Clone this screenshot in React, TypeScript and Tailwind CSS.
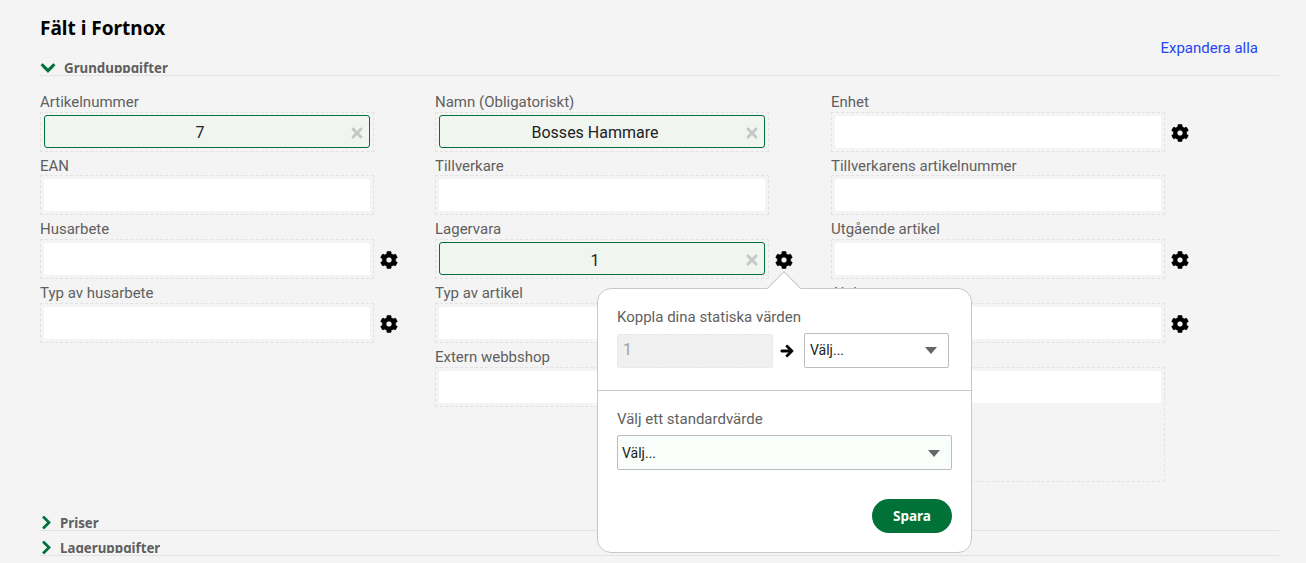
import React from "react";
import { FaCog, FaChevronDown, FaChevronRight, FaArrowRight, FaTimes } from "react-icons/fa";

type F = { label: string; value?: string; gear?: boolean; tall?: boolean };

const columns: F[][] = [
  [
    { label: "Artikelnummer", value: "7" },
    { label: "EAN" },
    { label: "Husarbete", gear: true },
    { label: "Typ av husarbete", gear: true },
  ],
  [
    { label: "Namn (Obligatoriskt)", value: "Bosses Hammare" },
    { label: "Tillverkare" },
    { label: "Lagervara", value: "1", gear: true },
    { label: "Typ av artikel" },
    { label: "Extern webbshop" },
  ],
  [
    { label: "Enhet", gear: true },
    { label: "Tillverkarens artikelnummer" },
    { label: "Utgående artikel", gear: true },
    { label: "Aktiv", gear: true },
    { label: "", tall: true },
  ],
];

function Field({ f }: { f: F }) {
  return (
    <div className="flex flex-col">
      <div className="h-[23.75px] text-[15px] leading-[28px] text-[#5f5f5f] whitespace-nowrap">{f.label}</div>
      <div className="flex items-start">
        <div
          className={`w-[334px] ${f.tall ? "h-[115px]" : "h-[40px]"} border border-dashed border-[#e2e2e2] p-[3px]`}
        >
          {f.value ? (
            <div className="relative -mt-[1px] flex h-[33px] items-center justify-center rounded-[3px] border border-[#00703c] bg-[#f0f5f0] pr-[14px] pt-[4px] text-[16px] text-[#222222]">
              {f.value}
              <FaTimes className="absolute right-[4px] top-[9px] text-[16px] text-[#c4c8c6]" />
            </div>
          ) : (
            <div className="h-[32px] rounded-[2px] bg-white" />
          )}
        </div>
        {f.gear && <FaCog className="ml-[6px] mt-[12px] stroke-current stroke-[8] text-[18px] text-black" />}
      </div>
    </div>
  );
}

function Caret() {
  return <span className="h-0 w-0 border-x-[6px] border-t-[7px] border-x-transparent border-t-[#666666]" />;
}

function Collapsed({ label }: { label: string }) {
  return (
    <div className="mt-[9px] flex h-[16px] items-start gap-[6px] overflow-hidden border-b border-[#e2e2e2]">
      <FaChevronRight className="-ml-[1px] stroke-current stroke-[20] text-[15px] text-[#00703c]" />
      <span className="block h-[13px] overflow-hidden text-[13.3px] font-bold leading-[16px] text-[#5f5f5f] font-['Noto_Sans',sans-serif]">{label}</span>
    </div>
  );
}

export default function App() {
  return (
    <div className="relative h-[563px] w-[1306px] overflow-hidden bg-[#f4f4f4] pl-[40px] pr-[27px] font-['Roboto',sans-serif]">
      <div className="flex h-[60px] items-start justify-between">
        <h1 className="mt-[15px] text-[19px] font-bold leading-[26px] text-black font-['Noto_Sans',sans-serif]">Fält i Fortnox</h1>
        <a className="mr-[21px] mt-[39px] text-[15px] leading-[19px] text-[#2546f0]">Expandera alla</a>
      </div>

      <div className="flex h-[16px] items-start overflow-hidden border-b border-[#e2e2e2]">
        <FaChevronDown className="stroke-current stroke-[30] text-[16px] text-[#00703c]" />
        <span className="ml-[8px] block h-[13px] overflow-hidden text-[13.3px] font-bold leading-[16px] text-[#5f5f5f] font-['Noto_Sans',sans-serif]">Grunduppgifter</span>
      </div>

      <div className="grid h-[431px] grid-cols-[395px_396px_395px] pt-[11.85px]">
        {columns.map((col, i) => (
          <div key={i} className="flex flex-col">
            {col.map((f, j) => (
              <Field key={j} f={f} />
            ))}
          </div>
        ))}
      </div>

      <div className="-mt-[1px]">
        <Collapsed label="Priser" />
        <Collapsed label="Lageruppgifter" />
      </div>

      {/* Popover */}
      <div className="absolute left-[597px] top-[288px] z-10 h-[265px] w-[375px] rounded-[14px] border border-[#c8c8c8] bg-white">
        <div className="absolute left-[174px] top-[-13px] h-[24px] w-[24px] rotate-45 border-l border-t border-[#c8c8c8] bg-white" />
        <div className="relative flex h-[102px] flex-col border-b border-[#c8c8c8] px-[19px] pt-[18px]">
          <div className="text-[15px] leading-[20px] text-[#5f5f5f]">Koppla dina statiska värden</div>
          <div className="mt-[6px] flex items-center">
            <div className="flex h-[34px] w-[156px] items-center rounded-[2px] border border-dashed border-[#e6e6e6] bg-[#f0f0f0] px-[5px] pb-[2px] text-[16px] text-[#a0a0a0]">1</div>
            <FaArrowRight className="ml-[7px] stroke-current stroke-[30] text-[14px] text-black" />
            <div className="ml-[10px] flex h-[35px] w-[145px] items-center justify-between rounded-[2px] border border-[#bdbdbd] bg-white pl-[5px] pr-[11px] text-[14px] text-[#222222]">
              Välj...
              <Caret />
            </div>
          </div>
        </div>
        <div className="relative flex flex-col px-[19px] pt-[18px]">
          <div className="text-[15px] leading-[20px] text-[#5f5f5f]">Välj ett standardvärde</div>
          <div className="mt-[6px] flex h-[35px] w-[335px] items-center justify-between rounded-[2px] border border-[#bdbdbd] bg-[#fafefa] pl-[4px] pr-[11px] pt-[1px] text-[14px] text-[#222222]">
            Välj...
            <Caret />
          </div>
          <div className="mt-[29px] flex w-[335px] justify-end">
            <button className="h-[34px] w-[80px] rounded-full bg-[#007237] text-[13.5px] font-bold text-white font-['Noto_Sans',sans-serif]">Spara</button>
          </div>
        </div>
      </div>
    </div>
  );
}
